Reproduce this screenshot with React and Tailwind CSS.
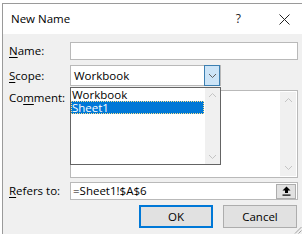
import React from "react";

function Chevron({ dir = "down", color = "#606060", size = 9 }) {
  const d = dir === "down" ? "M1 3 L4.5 6.5 L8 3" : "M1 6 L4.5 2.5 L8 6";
  return (
    <svg width={size} height={size} viewBox="0 0 9 9" fill="none">
      <path d={d} stroke={color} strokeWidth="1" />
    </svg>
  );
}

function Label({ children, className = "" }) {
  return <div className={"w-[61px] shrink-0 text-[11.5px] text-black " + className}>{children}</div>;
}

function U({ children }) {
  return <span className="underline underline-offset-2">{children}</span>;
}

function ScrollTrack({ className = "" }) {
  return (
    <div className={"flex w-[16px] flex-col items-center justify-between bg-[#f0f0f0] py-[3px] " + className}>
      <Chevron dir="up" color="#c4c4c4" />
      <Chevron dir="down" color="#c4c4c4" />
    </div>
  );
}

export default function App() {
  return (
    <div
      className="h-[234px] w-[302px] overflow-hidden bg-white pl-[2px] pt-[3px]"
      style={{ fontFamily: '"Open Sans", "Noto Sans", sans-serif' }}
    >
      <div className="relative flex h-full flex-col border-l border-t border-[#9a9a9a] bg-[#f0f0f0]">
        {/* title bar */}
        <div className="flex h-[30px] shrink-0 items-center bg-white pl-[8px]">
          <span className="text-[11.5px] text-black">New Name</span>
          <span className="ml-auto mr-[38px] text-[12px] text-[#222]">?</span>
          <svg className="mr-[12px]" width="11" height="11" viewBox="0 0 11 11">
            <path d="M0.5 0.5 L10.5 10.5 M10.5 0.5 L0.5 10.5" stroke="#222" strokeWidth="1" />
          </svg>
        </div>

        <div className="flex flex-col pl-[6px] pr-[4px] pt-[8px]">
          {/* Name */}
          <div className="flex h-[18px] items-center">
            <Label>
              <U>N</U>ame:
            </Label>
            <div className="h-full flex-1 border border-[#b9b9b9] bg-white" />
          </div>

          {/* Scope */}
          <div className="relative mt-[5px] flex h-[21px] items-center">
            <Label>
              <U>S</U>cope:
            </Label>
            <div className="flex h-full w-[151px] items-center border border-[#b9b9b9] bg-white">
              <span className="flex-1 pl-[3px] text-[11.5px] leading-none text-black">Workbook</span>
              <div className="flex h-[21px] w-[16px] items-center justify-center border border-[#3c7fb1] bg-[#cce4f7]">
                <Chevron />
              </div>
            </div>

            {/* open dropdown list */}
            <div className="absolute left-[61px] top-[22px] z-10 flex h-[78px] w-[151px] border border-[#646464] bg-white">
              <div className="flex flex-1 flex-col">
                <div className="h-[13px] pl-[1px] text-[11.5px] leading-[13px] text-black">Workbook</div>
                <div className="h-[13px] bg-[#0078d7] pl-[1px] text-[11.5px] leading-[13px] text-white outline-1 outline-dotted outline-[#ffe28a] -outline-offset-1">
                  Sheet1
                </div>
              </div>
              <ScrollTrack className="border-l border-white" />
            </div>
          </div>

          {/* Comment */}
          <div className="mt-[4px] flex h-[88px] items-start">
            <Label className="-mt-[1px]">
              Co<U>m</U>ment:
            </Label>
            <div className="flex h-full flex-1 border border-[#b9b9b9] bg-white">
              <div className="flex-1" />
              <ScrollTrack className="my-[1px] mr-[1px] py-[4px]" />
            </div>
          </div>

          {/* Refers to */}
          <div className="mt-[4px] flex h-[18px] items-center">
            <Label>
              <U>R</U>efers to:
            </Label>
            <div className="flex h-full flex-1 items-center border border-[#b9b9b9] bg-white">
              <span className="flex-1 pl-[2px] text-[11.5px] leading-none text-black">=Sheet1!$A$6</span>
              <div className="mr-[1px] flex h-[15px] w-[20px] items-center justify-center border border-[#adadad] bg-[#e1e1e1]">
                <svg width="9" height="10" viewBox="0 0 9 10">
                  <path d="M4.5 0.5 L8.5 4.5 L6 4.5 L6 7 L3 7 L3 4.5 L0.5 4.5 Z" fill="#000" />
                  <rect x="0.5" y="8.5" width="8" height="1.2" fill="#000" />
                </svg>
              </div>
            </div>
          </div>

          {/* buttons */}
          <div className="mt-[5px] flex h-[23px] justify-end gap-[10px] pr-[1px]">
            <button className="w-[74px] border-2 border-[#0078d7] bg-[#e1e1e1] text-[11.5px] text-black">OK</button>
            <button className="w-[74px] border border-[#adadad] bg-[#e1e1e1] text-[11.5px] text-black">Cancel</button>
          </div>
        </div>

        {/* resize grip */}
        <svg className="absolute bottom-0 right-0" width="8" height="8" viewBox="0 0 8 8">
          <path d="M7.5 1 L1 7.5 M7.5 4.5 L4.5 7.5" stroke="#a0a0a0" strokeWidth="1" />
        </svg>
      </div>
    </div>
  );
}
